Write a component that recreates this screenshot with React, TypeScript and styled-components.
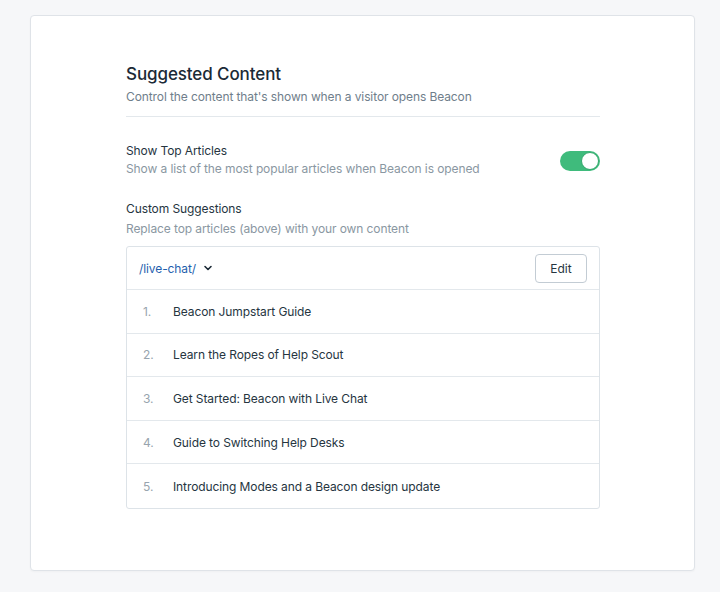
import React from "react";
import styled, { createGlobalStyle } from "styled-components";

const Global = createGlobalStyle`
  html, body { margin: 0; padding: 0; background: #f6f7f9; }
  body { font-family: Inter, "Noto Sans", "Liberation Sans", sans-serif; -webkit-font-smoothing: antialiased; }
  * { box-sizing: border-box; }
`;

const Page = styled.div`
  padding: 15px 25px 0 30px;
  height: 592px;
`;

const Card = styled.div`
  background: #fff;
  border: 1px solid #dfe3e8;
  border-radius: 4px;
  height: 556px;
  padding: 47px 94px 0 95px;
  box-shadow: 0 1px 2px rgba(0,0,0,0.03);
`;

const Header = styled.div`
  padding-bottom: 10px;
  border-bottom: 1px solid #e3e8ec;
`;

const Title = styled.h2`
  margin: 0;
  font-size: 17px;
  font-weight: 500;
  color: #1b2a36;
  line-height: 22px;
  letter-spacing: -0.1px;
`;

const Sub = styled.p`
  margin: 3px 0 0;
  font-size: 12px;
  letter-spacing: -0.1px;
  color: #6f7e8b;
  line-height: 18px;
`;

const Setting = styled.div<{ $mt: number }>`
  display: flex;
  align-items: center;
  justify-content: space-between;
  margin-top: ${(p) => p.$mt}px;
`;

const Label = styled.div`
  font-size: 12px;
  letter-spacing: -0.1px;
  color: #26353f;
  line-height: 18px;
`;

const Desc = styled.div<{ $mt?: number }>`
  font-size: 12px;
  letter-spacing: -0.1px;
  color: #8a97a2;
  line-height: 18px;
  margin-top: ${(p) => p.$mt ?? 0}px;
`;

const Toggle = styled.div`
  width: 40px;
  height: 20px;
  border-radius: 10px;
  background: #3fbb7c;
  position: relative;
  margin-top: 2px;
`;

const Knob = styled.div`
  position: absolute;
  right: 1px;
  top: 1px;
  width: 18px;
  height: 18px;
  border-radius: 50%;
  background: #fff;
  border: 1px solid #33a86c;
`;

const ListBox = styled.div`
  margin-top: 8px;
  border: 1px solid #dde3e8;
  border-radius: 3px;
`;

const ListHead = styled.div`
  height: 43px;
  display: flex;
  align-items: center;
  justify-content: space-between;
  padding: 0 12px 0 12px;
  border-bottom: 1px solid #e3e8ec;
`;

const Path = styled.div`
  display: flex;
  align-items: center;
  gap: 7px;
  font-size: 12px;
  letter-spacing: -0.1px;
  color: #1f5fae;
`;

const EditBtn = styled.button`
  width: 52px;
  height: 29px;
  border: 1px solid #c3ccd4;
  border-radius: 4px;
  background: #fff;
  font-family: inherit;
  font-size: 12px;
  color: #26353f;
  padding: 0;
`;

const Row = styled.div<{ $last?: boolean }>`
  height: 43.6px;
  display: flex;
  align-items: center;
  padding-left: 16px;
  font-size: 12px;
  letter-spacing: -0.1px;
  color: #26353f;
  border-bottom: ${(p) => (p.$last ? "none" : "1px solid #e3e8ec")};
`;

const Num = styled.span`
  width: 30px;
  color: #98a4ae;
`;

const items = [
  "Beacon Jumpstart Guide",
  "Learn the Ropes of Help Scout",
  "Get Started: Beacon with Live Chat",
  "Guide to Switching Help Desks",
  "Introducing Modes and a Beacon design update",
];

export default function App() {
  return (
    <>
      <Global />
      <Page>
        <Card>
          <Header>
            <Title>Suggested Content</Title>
            <Sub>Control the content that's shown when a visitor opens Beacon</Sub>
          </Header>
          <Setting $mt={25}>
            <div>
              <Label>Show Top Articles</Label>
              <Desc>Show a list of the most popular articles when Beacon is opened</Desc>
            </div>
            <Toggle>
              <Knob />
            </Toggle>
          </Setting>
          <Setting $mt={22}>
            <div>
              <Label>Custom Suggestions</Label>
              <Desc $mt={2}>Replace top articles (above) with your own content</Desc>
            </div>
          </Setting>
          <ListBox>
            <ListHead>
              <Path>
                /live-chat/
                <svg width="10" height="10" viewBox="0 0 10 10">
                  <path d="M2 3.5 L5 6.5 L8 3.5" fill="none" stroke="#1b2a36" strokeWidth="1.6" strokeLinecap="round" strokeLinejoin="round" />
                </svg>
              </Path>
              <EditBtn>Edit</EditBtn>
            </ListHead>
            {items.map((t, i) => (
              <Row key={t} $last={i === items.length - 1}>
                <Num>{i + 1}.</Num>
                {t}
              </Row>
            ))}
          </ListBox>
        </Card>
      </Page>
    </>
  );
}
